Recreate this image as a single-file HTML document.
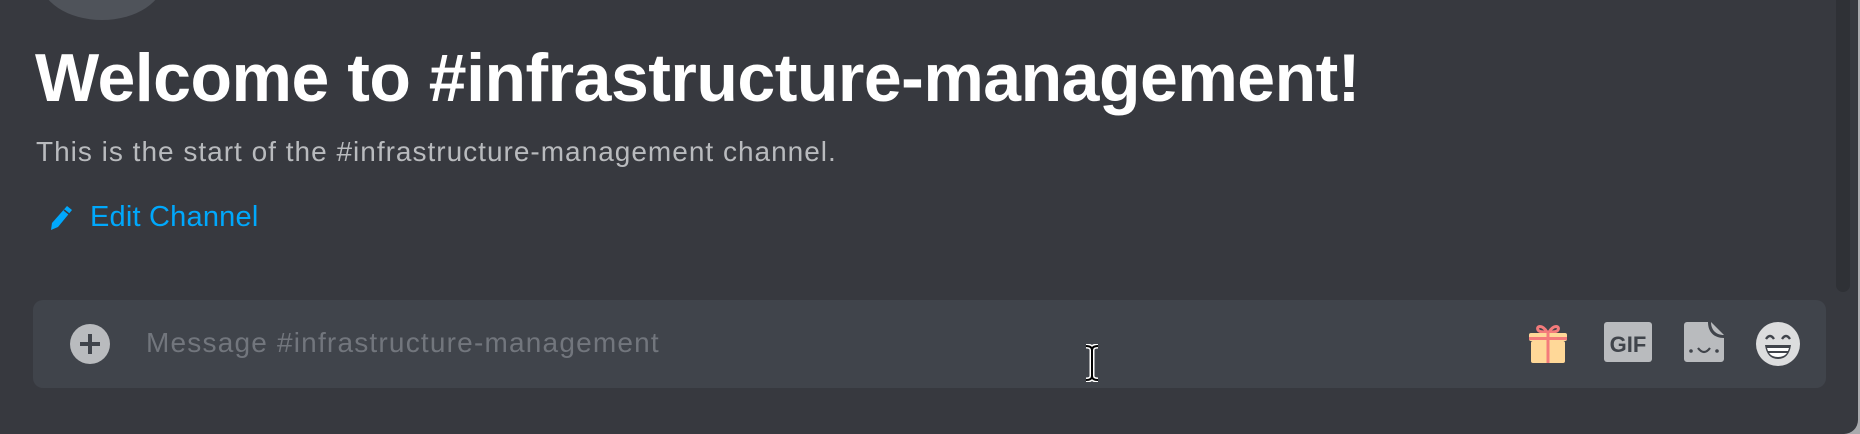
<!DOCTYPE html>
<html><head><style>
html,body{margin:0;padding:0;}
body{width:1860px;height:434px;background:#a9aaad;overflow:hidden;position:relative;font-family:"Liberation Sans",sans-serif;}
.win{position:absolute;left:0;top:0;width:1858px;height:434px;background:#37393f;border-bottom-right-radius:14px;}
.av{position:absolute;left:40px;top:-62px;width:124px;height:82px;border-radius:50%;background:#4f535a;}
.h{position:absolute;left:35px;top:38px;font-size:68px;font-weight:bold;color:#fff;white-space:nowrap;letter-spacing:-0.5px;line-height:80px;}
.sub{position:absolute;left:36px;top:136px;font-size:28px;color:#b9bbbe;white-space:nowrap;letter-spacing:1px;}
.edit{position:absolute;left:90px;top:201px;font-size:29px;color:#00a8fc;white-space:nowrap;letter-spacing:0.2px;}
.pen{position:absolute;left:49px;top:205px;}
.sb{position:absolute;left:1836px;top:0;width:14px;height:292px;background:#2f3136;border-radius:0 0 8px 8px;}
.box{position:absolute;left:33px;top:300px;width:1793px;height:88px;background:#40444b;border-radius:10px;}
.plus{position:absolute;left:70px;top:324px;}
.ph{position:absolute;left:146px;top:327px;font-size:28px;color:#72767d;white-space:nowrap;letter-spacing:1.2px;}
</style></head><body>
<div class="win">
<div class="av"></div>
<div class="h">Welcome to #infrastructure-management!</div>
<div class="sub">This is the start of the #infrastructure-management channel.</div>
<svg class="pen" width="24" height="28" viewBox="0 0 24 28"><path d="M18 1 L23 5 L9 22 L2 25 L3 18 Z" fill="#00a8fc"/><path d="M15 5 L20 9" stroke="#37393f" stroke-width="1.5"/></svg>
<div class="edit">Edit Channel</div>
<div class="sb"></div>
<div class="box"></div>
<svg class="plus" width="40" height="40" viewBox="0 0 40 40"><circle cx="20" cy="20" r="20" fill="#b9bbbe"/><path d="M20 10v20M10 20h20" stroke="#40444b" stroke-width="4"/></svg>
<div class="ph">Message #infrastructure-management</div>
<svg style="position:absolute;left:1526px;top:320px" width="44" height="44" viewBox="0 0 44 44">
<path d="M21 12 C16 4 10 6 12 10 C13 12 17 12 21 12 Z M23 12 C28 4 34 6 32 10 C31 12 27 12 23 12Z" fill="none" stroke="#f47b7b" stroke-width="3"/>
<rect x="3" y="13" width="38" height="8" rx="2" fill="#ffd898"/>
<rect x="5" y="21" width="34" height="22" rx="2" fill="#ffd898"/>
<rect x="3" y="17" width="38" height="3" fill="#f47b7b"/>
<rect x="20.5" y="13" width="3" height="30" fill="#f47b7b"/>
</svg>
<svg style="position:absolute;left:1604px;top:322px" width="48" height="40" viewBox="0 0 48 40"><rect width="48" height="40" rx="3" fill="#b9bbbe"/><text x="24" y="30" text-anchor="middle" font-family="Liberation Sans" font-weight="bold" font-size="22" fill="#40444b">GIF</text></svg>
<svg style="position:absolute;left:1684px;top:322px" width="40" height="40" viewBox="0 0 40 40"><path d="M3 0 H24 C24 10 30 16 40 16 V37 A3 3 0 0 1 37 40 H3 A3 3 0 0 1 0 37 V3 A3 3 0 0 1 3 0Z" fill="#b9bbbe"/><path d="M27 0 L40 13 C32 13 27 8 27 0Z" fill="#b9bbbe"/><circle cx="7" cy="29" r="1.8" fill="#40444b"/><circle cx="33" cy="29" r="1.8" fill="#40444b"/><path d="M14 26 Q20 34 26 26" stroke="#40444b" stroke-width="2.2" fill="none"/></svg>
<svg style="position:absolute;left:1756px;top:322px" width="44" height="44" viewBox="0 0 44 44"><circle cx="22" cy="22" r="22" fill="#dcddde"/><path d="M10 17 Q14 11 18 17 M26 17 Q30 11 34 17" stroke="#40444b" stroke-width="2.4" fill="none"/><path d="M9 23 H35 Q33 37 22 37 Q11 37 9 23Z" fill="#40444b"/><path d="M11 26 H33 L32 29 H12Z M13 31 H31 Q28 35 22 35 Q16 35 13 31Z" fill="#fff"/></svg>
<svg style="position:absolute;left:1083px;top:344px" width="18" height="38" viewBox="0 0 18 38"><path d="M3 2 Q9 2 9 6 Q9 2 15 2 M9 6 V32 M3 36 Q9 36 9 32 Q9 36 15 36" stroke="#fff" stroke-width="5" fill="none"/><path d="M3 2 Q9 2 9 6 Q9 2 15 2 M9 6 V32 M3 36 Q9 36 9 32 Q9 36 15 36" stroke="#000" stroke-width="2" fill="none"/></svg>
</div>
</body></html>
